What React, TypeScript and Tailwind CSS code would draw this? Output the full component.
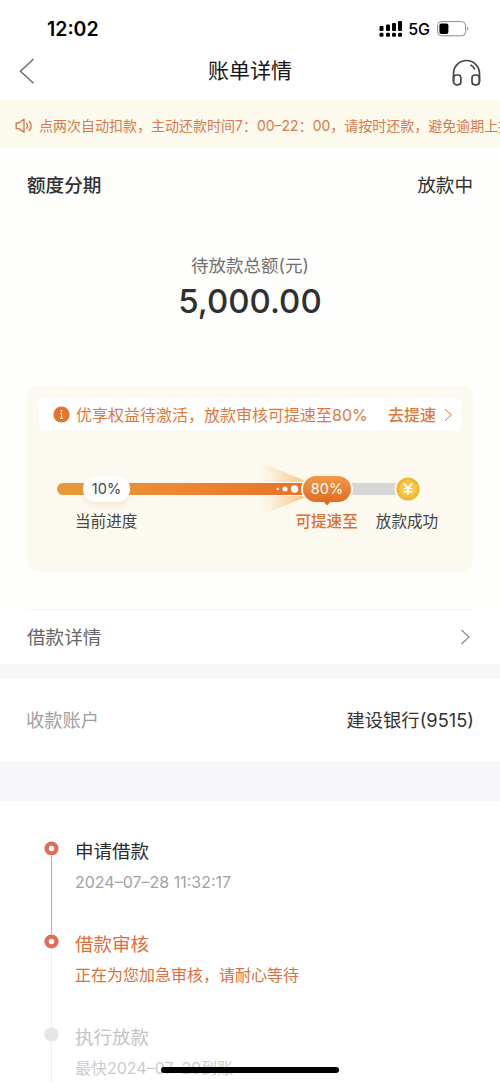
import React from 'react';

interface TimelineStep {
  id: string;
  title: string;
  detail: string;
  state: 'done' | 'active' | 'pending';
}

const steps: TimelineStep[] = [
  { id: 'apply', title: '申请借款', detail: '2024–07–28 11:32:17', state: 'done' },
  { id: 'review', title: '借款审核', detail: '正在为您加急审核，请耐心等待', state: 'active' },
  { id: 'payout', title: '执行放款', detail: '最快2024–07–29到账', state: 'pending' }
];

const titleColors = {
  done: 'text-[#2b2b2e]',
  active: 'text-[#dc6f3c]',
  pending: 'text-[#c4c4c6]'
};

const detailColors = {
  done: 'text-[#a2a2a4]',
  active: 'text-[#dc6f3c]',
  pending: 'text-[#cbcbcd]'
};

const StatusBar: React.FC = () => (
  <div className="flex h-[42px] items-center justify-between pt-[15px] pr-[31px] pl-[47px] text-black">
    <span className="text-[19.5px] leading-7 font-semibold">12:02</span>
    <div className="flex items-center">
      <svg width="24" height="18" viewBox="0 0 24 18" fill="currentColor">
        <rect x="0.5" y="6" width="4" height="5" rx="1" />
        <rect x="7" y="4.5" width="4" height="6.5" rx="1" />
        <rect x="13" y="3" width="4" height="8" rx="1" />
        <rect x="19" y="1" width="4" height="10" rx="1" />
        <rect x="0.5" y="12.8" width="4" height="4" rx="1.3" />
        <rect x="7" y="12.8" width="4" height="4" rx="1.3" />
        <rect x="13" y="12.8" width="4" height="4" rx="1.3" />
        <rect x="19" y="12.8" width="4" height="4" rx="1.3" />
      </svg>
      <span className="ml-[5px] text-base leading-6 font-medium">5G</span>
      <svg className="ml-[7px]" width="32" height="16" viewBox="0 0 32 16">
        <rect x="0.6" y="0.6" width="28" height="14.2" rx="4" fill="none" stroke="#8b8b8b" />
        <rect x="2.4" y="2.6" width="9" height="10.4" rx="2" fill="#000" />
        <path d="M30.2 5.6c1.4.6 1.4 3.6 0 4.2z" fill="#8b8b8b" />
      </svg>
    </div>
  </div>
);

const NavBar: React.FC = () => (
  <div className="flex h-[58px] items-center justify-between pr-[19px] pl-[19px]">
    <svg width="30" height="28" viewBox="0 0 30 28" fill="none" stroke="#6f6f6f" strokeWidth="1.5">
      <path d="M14.5 2 1.5 14.2 14.5 26.2" />
    </svg>
    <h1 className="text-[21px] leading-7 text-[#151515]">账单详情</h1>
    <svg
      className="mt-1"
      width="30"
      height="28"
      viewBox="0 0 30 28"
      fill="none"
      stroke="#454545"
      strokeWidth="1.7"
      strokeLinecap="round"
      strokeLinejoin="round"
    >
      <path d="M2.5 22V14.5a13 13 0 0 1 26 0V22" />
      <rect x="2.5" y="16" width="7.4" height="9.8" rx="3" />
      <rect x="21" y="16" width="7.4" height="9.8" rx="3" />
      <path d="M20 6.2c1.6.8 2.8 2 3.6 3.6" />
    </svg>
  </div>
);

const NoticeBar: React.FC = () => (
  <div className="flex h-[48px] items-center overflow-hidden bg-[#fcf9ed] pt-[3px] pl-[15px] text-[#d9794f]">
    <svg
      className="shrink-0"
      width="18"
      height="16"
      viewBox="0 0 18 16"
      fill="none"
      stroke="currentColor"
      strokeWidth="1.4"
      strokeLinejoin="round"
      strokeLinecap="round"
    >
      <path d="M1.2 5h2.6L9 1.2v13L3.8 10.6H1.2z" />
      <path d="M11.6 5.4c1.1 1.4 1.1 3.5 0 4.9M14.2 3.2c2.7 2.6 2.7 6.7 0 9.3" />
    </svg>
    <p className="ml-[6px] text-sm leading-5 whitespace-nowrap">
      点两次自动扣款，主动还款时间7：00–22：00，请按时还款，避免逾期上报征信
    </p>
  </div>
);

const SpeedUpCard: React.FC = () => (
  <div className="mx-[27px] mt-[63px] h-[187px] rounded-[12px] bg-[#fcf9f0] px-3 pt-[13px]">
    <div className="flex h-[33px] items-center rounded-md bg-white pr-2 pl-[14px] text-[#dd7a3b]">
      <svg className="shrink-0" width="17" height="17" viewBox="0 0 17 17">
        <circle cx="8.5" cy="8.5" r="8.1" fill="#e5742c" />
        <circle cx="8.5" cy="4.8" r="0.9" fill="#fff" />
        <path d="M7.2 7.2h1.4v5M7 12.3h3.2" stroke="#fff" fill="none" />
      </svg>
      <span className="ml-[6px] text-base leading-6 whitespace-nowrap">
        优享权益待激活，放款审核可提速至80%
      </span>
      <span className="ml-auto text-base leading-6 font-medium whitespace-nowrap">去提速</span>
      <svg className="ml-2 shrink-0" width="9" height="14" viewBox="0 0 9 14" fill="none" stroke="currentColor">
        <path d="M1 1.2 7.4 7 1 12.8" />
      </svg>
    </div>

    {/* Progress track with the milestone markers over it */}
    <div className="relative mt-[52px] mr-[53px] ml-[18px] flex h-3">
      <div className="w-[271px] rounded-l-full bg-linear-to-r from-[#e69a3c] via-[#ed8431] to-[#e46f26]" />
      <div className="flex-1 bg-[#d6d6d6]" />

      <svg className="absolute -top-[21px] left-[201px]" width="56" height="54" viewBox="0 0 56 54">
        <defs>
          <linearGradient id="beam" x1="0" x2="1">
            <stop offset="0" stopColor="#f7cf91" stopOpacity="0" />
            <stop offset="1" stopColor="#f5b96b" stopOpacity="0.9" />
          </linearGradient>
        </defs>
        <path d="M2 0 50 20H2zM2 54 50 34H2z" fill="url(#beam)" />
        <circle cx="19.8" cy="27" r="1.3" fill="#fff" />
        <circle cx="27" cy="27" r="2.5" fill="#fff" />
        <circle cx="36.6" cy="27" r="3.7" fill="#fff" />
      </svg>

      <div className="absolute -top-[7px] left-[26px] flex h-[26px] w-[47px] items-center justify-center rounded-full bg-white text-[14.5px] text-[#444] shadow-[0_3px_6px_rgba(222,160,100,0.2)]">
        10%
      </div>

      <div className="absolute -top-[9px] left-[244px] flex h-[30px] w-[52px] items-center justify-center rounded-full border-2 border-[#fff7e8] bg-linear-to-b from-[#f0994a] to-[#e06d22] text-[14.5px] text-white">
        80%
        <svg className="absolute -bottom-[4px] left-[20px]" width="8" height="5" viewBox="0 0 8 5">
          <path d="M0 0h8L4 4.6z" fill="#e06d22" />
        </svg>
      </div>

      <svg className="absolute -top-[8px] left-[337px]" width="28" height="28" viewBox="0 0 28 28">
        <circle cx="14" cy="14" r="13.4" fill="#fffdf5" />
        <circle cx="14" cy="14" r="11.6" fill="#f1b62f" />
        <circle cx="14" cy="14" r="9" fill="#f6c744" />
        <path d="M9.8 8.4 14 13.2l4.2-4.8M9.4 13.5h9.2M9.4 16.6h9.2M14 13.2v6.6" stroke="#fff" strokeWidth="1.7" fill="none" />
      </svg>
    </div>

    <div className="mt-[15px] flex pl-[36px] text-[15.6px] leading-6 text-[#444]">
      <span>当前进度</span>
      <span className="ml-[158px] font-medium text-[#df7130]">可提速至</span>
      <span className="ml-[18px]">放款成功</span>
    </div>
  </div>
);

const StepDot: React.FC<{ pending: boolean }> = ({ pending }) => (
  <svg className="shrink-0" width="15" height="15" viewBox="0 0 15 15">
    {pending ? (
      <circle cx="7.5" cy="7.5" r="7.2" fill="#e6e6e9" />
    ) : (
      <circle cx="7.5" cy="7.5" r="4.9" fill="#fff" stroke="#e06f59" strokeWidth="4.4" />
    )}
  </svg>
);

const Timeline: React.FC = () => (
  <div className="h-[281px] overflow-hidden bg-white pt-[40px] pl-[44px]">
    {steps.map((step) => (
      <div key={step.id} className="flex h-[93px]">
        <div className="flex w-[15px] shrink-0 flex-col items-center">
          <StepDot pending={step.state === 'pending'} />
          <div className={`w-px flex-1 ${step.state === 'done' ? 'bg-[#d5a99c]' : 'bg-[#efeff1]'}`} />
        </div>
        <div className="-mt-[4px] ml-4">
          <p className={`text-[18.5px] leading-7 ${titleColors[step.state]}`}>{step.title}</p>
          <p className={`mt-[5px] text-base leading-6 ${detailColors[step.state]}`}>{step.detail}</p>
        </div>
      </div>
    ))}
  </div>
);

export default function App() {
  return (
    <div className="relative flex h-[1082px] w-[500px] flex-col overflow-hidden bg-white font-['Inter','Noto_Sans_CJK_SC',sans-serif]">
      <StatusBar />
      <NavBar />
      <NoticeBar />

      <section className="h-[461px] bg-[#fefefc]">
        <div className="flex items-center justify-between px-[27px] pt-[23px] text-[18.6px] leading-7 text-[#303030]">
          <h2 className="font-medium">额度分期</h2>
          <span>放款中</span>
        </div>
        <div className="mt-[55px] flex flex-col items-center">
          <p className="text-[17.5px] leading-6 text-[#707070]">待放款总额(元)</p>
          <p className="mt-[2px] text-[33px] leading-[42px] font-medium text-[#303030]">5,000.00</p>
        </div>
        <SpeedUpCard />
      </section>

      <section className="px-[27px]">
        <div className="flex h-[55px] items-center justify-between border-t border-[#f5f5f5]">
          <span className="text-[18.6px] leading-7 text-[#666]">借款详情</span>
          <svg className="mr-[2px]" width="11" height="16" viewBox="0 0 11 16" fill="none" stroke="#909090" strokeWidth="1.3">
            <path d="M1.5 1 9 8 1.5 15" />
          </svg>
        </div>
      </section>

      <div className="h-[14px] bg-[#f6f6f6]" />

      <section className="flex h-[84px] items-center justify-between px-[26px] text-[18.3px] leading-7">
        <span className="text-[#a0a0a0]">收款账户</span>
        <span className="text-[#333]">建设银行(9515)</span>
      </section>

      <div className="h-[39px] bg-[#f6f5f8]" />

      <Timeline />

      {/* Home indicator */}
      <div className="absolute bottom-[9px] left-[161px] h-[6px] w-[178px] rounded-full bg-black" />
    </div>
  );
}
